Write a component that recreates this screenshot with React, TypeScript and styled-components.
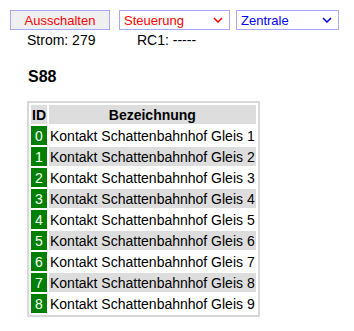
import React from 'react'
import styled, { createGlobalStyle } from 'styled-components'

const GlobalStyle = createGlobalStyle`
  html, body {
    margin: 0;
    padding: 0;
    background: #ffffff;
    font-family: 'Liberation Sans', Arial, sans-serif;
  }
`

const Page = styled.div`
  padding: 10px 0 0 10px;
`

const Toolbar = styled.div`
  display: flex;
  align-items: center;
`

const Button = styled.button`
  width: 100px;
  height: 20px;
  padding: 0;
  border: 1px solid #a8a8f8;
  background: #efefef;
  color: #ff0000;
  font-family: 'Liberation Sans', Arial, sans-serif;
  font-size: 13px;
`

const Select = styled.div<{ $color: string; $width: number; $gap: number }>`
  box-sizing: border-box;
  width: ${p => p.$width}px;
  height: 20px;
  margin-left: ${p => p.$gap}px;
  border: 1px solid #a8a8f8;
  background: #ffffff;
  color: ${p => p.$color};
  font-size: 13px;
  display: flex;
  align-items: center;
  justify-content: space-between;
  padding: 0 6px 0 4px;
`

const Status = styled.div`
  display: flex;
  font-size: 14px;
  color: #000000;
  padding: 2px 0 0 17px;
  height: 18px;
`

const StatusItem = styled.span`
  width: 110px;
`

const Heading = styled.h3`
  margin: 18px 0 0 18px;
  font-size: 16px;
  font-weight: bold;
`

const Table = styled.table`
  margin: 15px 0 0 17px;
  border: 2px solid #d8d8d8;
  border-spacing: 2px;
  font-size: 14px;
`

const Th = styled.th`
  background: #dddddd;
  font-weight: bold;
  padding: 1px;
  height: 17px;
`

const IdCell = styled.td`
  background: #008000;
  color: #ffffff;
  text-align: center;
  padding: 1px 2px;
  height: 17px;
`

const NameCell = styled.td<{ $odd: boolean }>`
  background: ${p => (p.$odd ? '#dddddd' : 'transparent')};
  color: #000000;
  padding: 1px;
  white-space: nowrap;
`

const Chevron = ({ color }: { color: string }) => (
  <svg width='10' height='6' viewBox='0 0 10 6'>
    <path d='M1 1 L5 5 L9 1' fill='none' stroke={color} strokeWidth='1.5' />
  </svg>
)

export default function App() {
  const rows = Array.from({ length: 9 }, (_, i) => i)
  return (
    <Page>
      <GlobalStyle />
      <Toolbar>
        <Button>Ausschalten</Button>
        <Select $color='#ff0000' $width={111} $gap={9}>
          <span>Steuerung</span>
          <Chevron color='#ff0000' />
        </Select>
        <Select $color='#0000ff' $width={103} $gap={6}>
          <span>Zentrale</span>
          <Chevron color='#0000ff' />
        </Select>
      </Toolbar>
      <Status>
        <StatusItem>Strom: 279</StatusItem>
        <StatusItem>RC1: -----</StatusItem>
      </Status>
      <Heading>S88</Heading>
      <Table>
        <thead>
          <tr>
            <Th>ID</Th>
            <Th>Bezeichnung</Th>
          </tr>
        </thead>
        <tbody>
          {rows.map(i => (
            <tr key={i}>
              <IdCell>{i}</IdCell>
              <NameCell $odd={i % 2 === 1}>
                Kontakt Schattenbahnhof Gleis {i + 1}
              </NameCell>
            </tr>
          ))}
        </tbody>
      </Table>
    </Page>
  )
}
